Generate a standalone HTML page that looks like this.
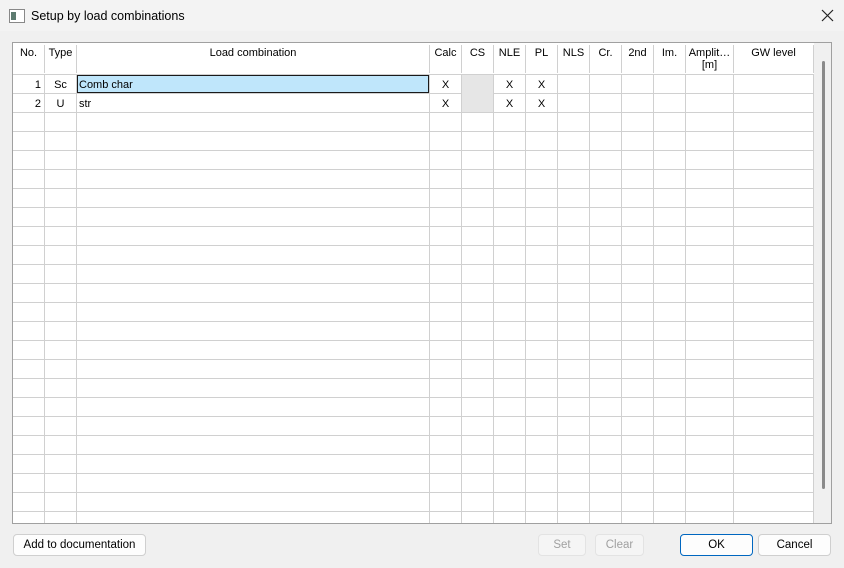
<!DOCTYPE html>
<html><head><meta charset="utf-8"><style>
body{margin:0;width:844px;height:568px;background:#f0f0f0;font-family:"Liberation Sans",sans-serif;font-size:11px;color:#000;position:relative;overflow:hidden}
.abs{position:absolute}
#title{left:0;top:0;width:844px;height:31px;background:#f3f3f3}
#grid{left:12px;top:42px;width:818px;height:480px;border:1px solid #a0a0a0;background:#fff;overflow:hidden}
#hdr{left:0;top:0;width:801px;height:31px;background:#fff;border-bottom:1px solid #d0d0d0}
#rows{left:0;top:32px;width:801px;height:460px;background:repeating-linear-gradient(to bottom,transparent 0,transparent 18px,#d0d0d0 18px,#d0d0d0 19px)}
.v{position:absolute;width:1px;background:#d0d0d0;top:32px;height:460px}
.hv{position:absolute;width:1px;background:#d0d0d0;top:2px;height:28px}
.h{position:absolute;top:4px;text-align:center;font-size:11px}
.c{position:absolute;font-size:11px;line-height:20px;text-align:center}
.btn{position:absolute;height:20px;border:1px solid #cfcfcf;border-radius:4px;background:#fdfdfd;text-align:center;line-height:21px;font-size:11.5px}
</style></head><body>
<div id="title" class="abs"></div>
<div class="abs" style="left:9px;top:9px;width:14px;height:12px;border:1px solid #888;background:#fff"><div style="position:absolute;left:1px;top:2px;width:5px;height:8px;background:#5d7b70"></div></div>
<div class="abs" style="left:31px;top:9px;font-size:12.5px">Setup by load combinations</div>
<svg class="abs" style="left:821px;top:9px" width="13" height="13"><path d="M1 1L12 12M12 1L1 12" stroke="#222" stroke-width="1.2"/></svg>
<div id="grid" class="abs">
<div id="hdr" class="abs"></div>
<div id="rows" class="abs"></div>
<div class="hv" style="left:31px"></div><div class="v" style="left:31px"></div>
<div class="hv" style="left:63px"></div><div class="v" style="left:63px"></div>
<div class="hv" style="left:416px"></div><div class="v" style="left:416px"></div>
<div class="hv" style="left:448px"></div><div class="v" style="left:448px"></div>
<div class="hv" style="left:480px"></div><div class="v" style="left:480px"></div>
<div class="hv" style="left:512px"></div><div class="v" style="left:512px"></div>
<div class="hv" style="left:544px"></div><div class="v" style="left:544px"></div>
<div class="hv" style="left:576px"></div><div class="v" style="left:576px"></div>
<div class="hv" style="left:608px"></div><div class="v" style="left:608px"></div>
<div class="hv" style="left:640px"></div><div class="v" style="left:640px"></div>
<div class="hv" style="left:672px"></div><div class="v" style="left:672px"></div>
<div class="hv" style="left:720px"></div><div class="v" style="left:720px"></div>
<div class="hv" style="left:800px"></div><div class="v" style="left:800px"></div>
<div class="h" style="left:0;width:31px">No.</div>
<div class="h" style="left:32px;width:31px">Type</div>
<div class="h" style="left:64px;width:352px">Load combination</div>
<div class="h" style="left:417px;width:31px">Calc</div>
<div class="h" style="left:449px;width:31px">CS</div>
<div class="h" style="left:481px;width:31px">NLE</div>
<div class="h" style="left:513px;width:31px">PL</div>
<div class="h" style="left:545px;width:31px">NLS</div>
<div class="h" style="left:577px;width:31px">Cr.</div>
<div class="h" style="left:609px;width:31px">2nd</div>
<div class="h" style="left:641px;width:31px">Im.</div>
<div class="h" style="left:673px;width:47px;line-height:12px">Amplit…<br>[m]</div>
<div class="h" style="left:721px;width:79px">GW level</div>
<div class="c" style="left:0;top:32px;width:28px;text-align:right">1</div>
<div class="c" style="left:0;top:51px;width:28px;text-align:right">2</div>
<div class="c" style="left:32px;top:32px;width:31px">Sc</div>
<div class="c" style="left:32px;top:51px;width:31px">U</div>
<div class="abs" style="left:64px;top:32px;width:350px;height:16px;background:#bfe6fb;border:1px solid #1a1a1a"></div>
<div class="c" style="left:66px;top:32px;text-align:left">Comb char</div>
<div class="c" style="left:66px;top:51px;text-align:left">str</div>
<div class="abs" style="left:449px;top:32px;width:31px;height:37px;background:#e6e6e6"></div>
<div class="c" style="left:417px;top:32px;width:31px">X</div><div class="c" style="left:417px;top:51px;width:31px">X</div>
<div class="c" style="left:481px;top:32px;width:31px">X</div><div class="c" style="left:481px;top:51px;width:31px">X</div>
<div class="c" style="left:513px;top:32px;width:31px">X</div><div class="c" style="left:513px;top:51px;width:31px">X</div>
<div class="abs" style="left:801px;top:0;width:17px;height:480px;background:#f0f0f0"></div>
<div class="abs" style="left:809px;top:18px;width:3px;height:428px;background:#8a8a8a;border-radius:2px"></div>
</div>
<div class="btn" style="left:13px;top:534px;width:131px">Add to documentation</div>
<div class="btn" style="left:538px;top:534px;width:46px;color:#a0a0a0;background:#f5f5f5;border-color:#e3e3e3">Set</div>
<div class="btn" style="left:595px;top:534px;width:47px;color:#a0a0a0;background:#f5f5f5;border-color:#e3e3e3">Clear</div>
<div class="btn" style="left:680px;top:534px;width:71px;border-color:#0067c0">OK</div>
<div class="btn" style="left:758px;top:534px;width:71px">Cancel</div>
</body></html>
